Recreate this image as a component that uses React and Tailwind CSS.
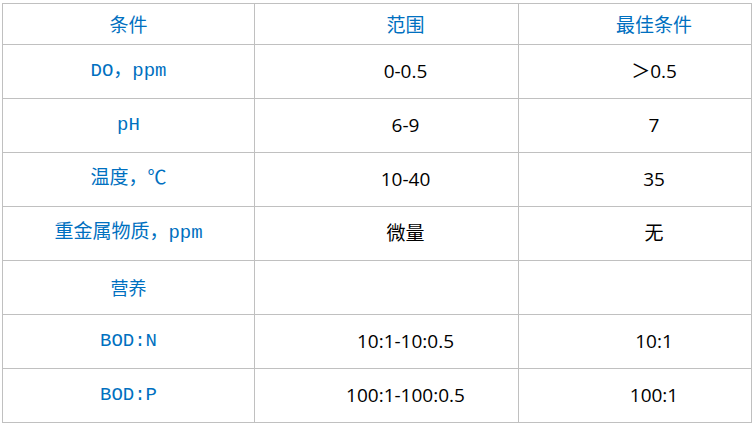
import React from 'react';

const rows = [
  { name: 'DO，ppm', range: '0-0.5', best: '＞0.5' },
  { name: 'pH', range: '6-9', best: '7' },
  { name: '温度，℃', range: '10-40', best: '35' },
  { name: '重金属物质，ppm', range: '微量', best: '无' },
  { name: '营养', range: '', best: '', sans: true },
  { name: 'BOD:N', range: '10:1-10:0.5', best: '10:1' },
  { name: 'BOD:P', range: '100:1-100:0.5', best: '100:1' },
];

const cell = 'border-r border-b border-[#c0c0c0] flex items-center justify-center';
const monoFont = "font-['Liberation_Mono','Noto_Sans_CJK_SC',monospace]";
const cjkFont = "font-['Noto_Sans_CJK_SC',sans-serif]";
const dataFont = "font-['Open_Sans','Noto_Sans_CJK_SC',sans-serif]";

export default function App() {
  return (
    <div className="w-[753px] h-[425px] bg-white pl-[2px] pt-[3px]">
      <div className="grid grid-cols-[252px_264px_233px] w-[750px] border-l border-t border-[#c0c0c0]">
        {/* header */}
        <div className={`${cell} h-[41px] text-[19px] text-[#0070c0] ${cjkFont}`}>条件</div>
        <div className={`${cell} h-[41px] pl-[38px] text-[19px] text-[#0070c0] ${cjkFont}`}>范围</div>
        <div className={`${cell} h-[41px] pl-[38px] text-[19px] text-[#0070c0] ${cjkFont}`}>最佳条件</div>

        {rows.map((r) => (
          <React.Fragment key={r.name}>
            <div
              className={`${cell} h-[54px] text-[#0070c0] ${
                r.sans ? `text-[18px] ${cjkFont}` : `text-[19px] ${monoFont}`
              }`}
            >
              {r.name}
            </div>
            <div className={`${cell} h-[54px] pl-[38px] text-[19px] text-black ${dataFont}`}>
              {r.range}
            </div>
            <div className={`${cell} h-[54px] pl-[38px] text-[19px] text-black ${dataFont}`}>
              {r.best}
            </div>
          </React.Fragment>
        ))}
      </div>
    </div>
  );
}
